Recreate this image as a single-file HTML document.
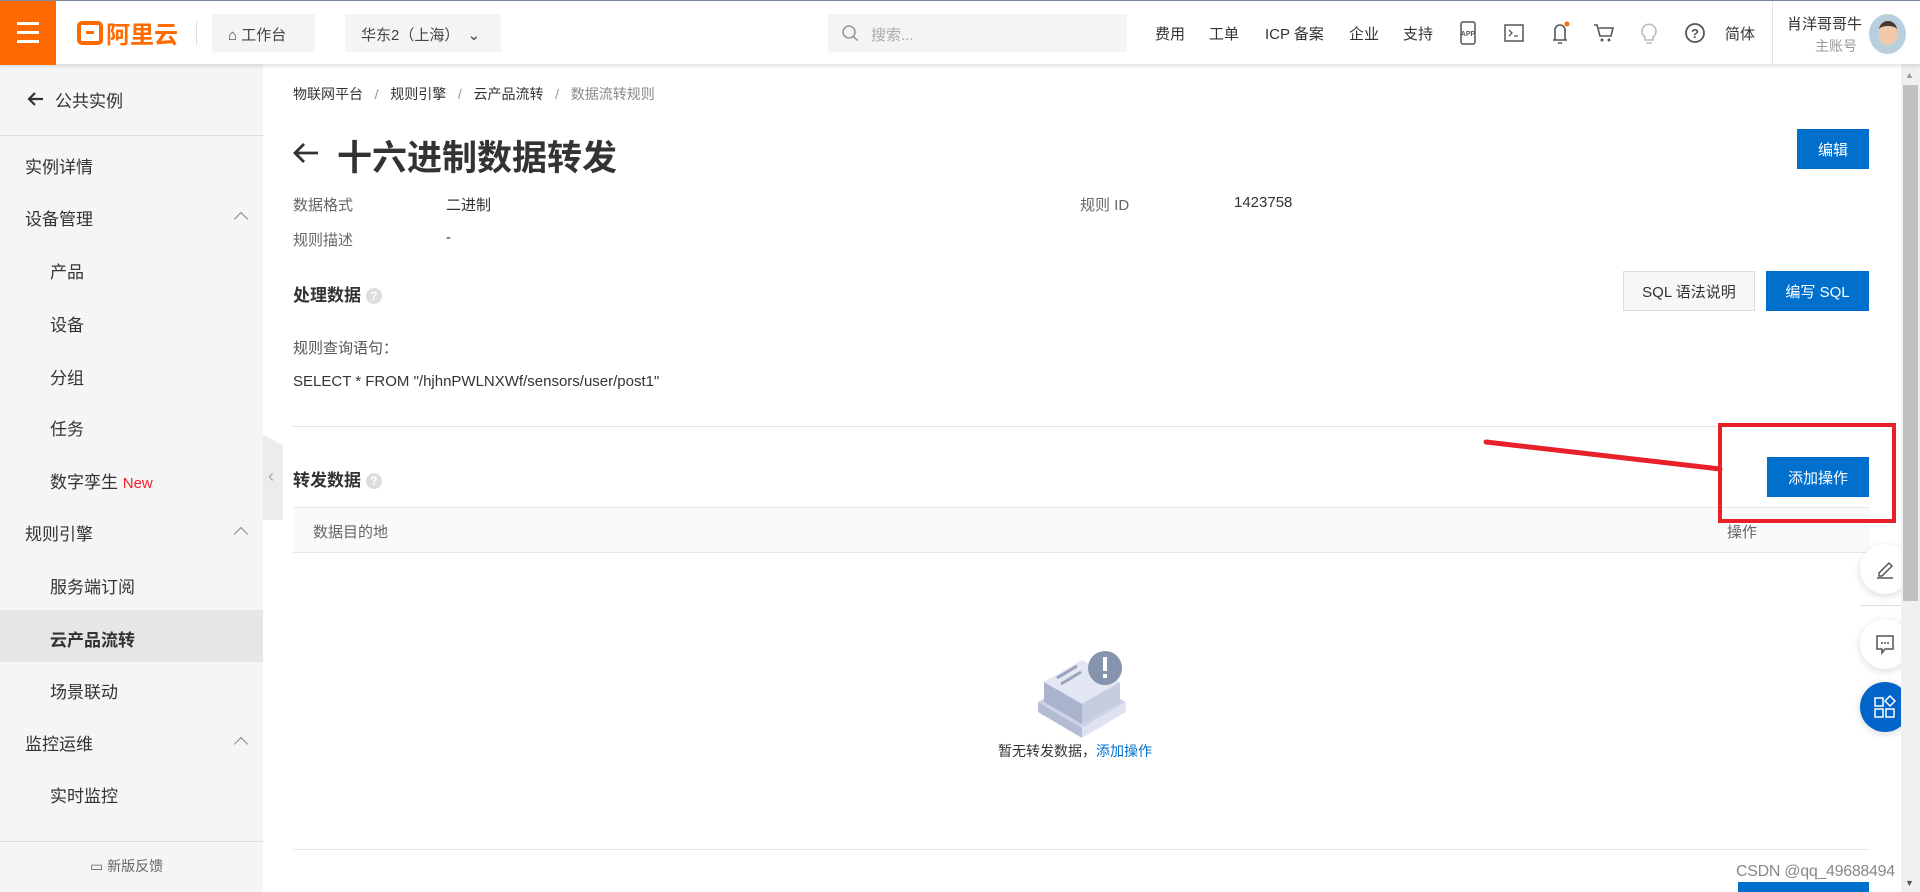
<!DOCTYPE html>
<html><head><meta charset="utf-8"><style>
*{margin:0;padding:0;box-sizing:border-box}
body{width:1920px;height:892px;overflow:hidden;position:relative;background:#fff;font-family:"Liberation Sans","Noto Sans CJK SC",sans-serif;color:#333}
.a{position:absolute;white-space:nowrap}
.hdr{position:absolute;left:0;top:0;width:1920px;height:64px;background:#fff;box-shadow:0 2px 4px rgba(0,0,0,.12);z-index:5;border-top:1px solid #7a8a9a}
.side{position:absolute;left:0;top:64px;width:263px;height:828px;background:#f5f5f5}
.si{position:absolute;left:25px;font-size:17px;color:#333}
.sub{left:50px}
.chev{position:absolute;left:236px;width:10px;height:10px;border-left:1.5px solid #888;border-top:1.5px solid #888;transform:rotate(45deg)}
.btn{position:absolute;background:#0070cc;color:#fff;font-size:15px;display:flex;align-items:center;justify-content:center}
.lab{font-size:15px;color:#666}
.circ{position:absolute;width:50px;height:50px;border-radius:50%;background:#fff;box-shadow:0 2px 8px rgba(0,0,0,.15);display:flex;align-items:center;justify-content:center}
</style></head><body>
<div class="hdr">
 <div class="a" style="left:0;top:0;width:56px;height:64px;background:#ff6a00"></div>
 <div class="a" style="left:17px;top:21px;width:22px;height:3px;background:#fff"></div>
 <div class="a" style="left:17px;top:30px;width:22px;height:3px;background:#fff"></div>
 <div class="a" style="left:17px;top:39px;width:22px;height:3px;background:#fff"></div>
 <div class="a" style="left:77px;top:20px;width:26px;height:24px;border:4px solid #ff6a00;border-radius:5px"></div>
 <div class="a" style="left:86px;top:30px;width:8px;height:3px;background:#ff6a00"></div>
 <div class="a" style="left:106px;top:14px;font-size:24px;font-weight:bold;color:#ff6a00">阿里云</div>
 <div class="a" style="left:196px;top:20px;width:1px;height:24px;background:#ddd"></div>
 <div class="a" style="left:212px;top:13px;width:103px;height:38px;background:#f3f4f6"></div>
 <div class="a" style="left:228px;top:23px;font-size:15px;color:#444">⌂ 工作台</div>
 <div class="a" style="left:345px;top:13px;width:156px;height:38px;background:#f3f4f6"></div>
 <div class="a" style="left:361px;top:23px;font-size:15px;color:#444">华东2（上海）&nbsp;&nbsp;⌄</div>
 <div class="a" style="left:828px;top:13px;width:299px;height:38px;background:#f3f4f6"></div>
 <svg class="a" style="left:841px;top:23px" width="18" height="18"><circle cx="8" cy="8" r="6" fill="none" stroke="#999" stroke-width="1.6"/><line x1="12.5" y1="12.5" x2="16.5" y2="16.5" stroke="#999" stroke-width="1.6"/></svg>
 <div class="a" style="left:871px;top:23px;font-size:15px;color:#aaa">搜索...</div>
 <div class="a" style="left:1155px;top:22px;font-size:15px;color:#333">费用</div>
 <div class="a" style="left:1209px;top:22px;font-size:15px">工单</div>
 <div class="a" style="left:1265px;top:22px;font-size:15px">ICP 备案</div>
 <div class="a" style="left:1349px;top:22px;font-size:15px">企业</div>
 <div class="a" style="left:1403px;top:22px;font-size:15px">支持</div>
 <svg class="a" style="left:1458px;top:20px" width="20" height="24"><rect x="3" y="1" width="14" height="22" rx="2" fill="none" stroke="#555" stroke-width="1.5"/><text x="10" y="15" font-size="7" font-weight="bold" text-anchor="middle" fill="#555" font-family="Liberation Sans">APP</text></svg>
 <svg class="a" style="left:1504px;top:22px" width="20" height="20"><rect x="1" y="2" width="18" height="16" fill="none" stroke="#555" stroke-width="1.5"/><path d="M5 7l3 3-3 3M10 13h4" fill="none" stroke="#555" stroke-width="1.3"/></svg>
 <svg class="a" style="left:1549px;top:20px" width="22" height="24"><path d="M6 19V9a5 5 0 0110 0v10M4 19h14M9 22h4" fill="none" stroke="#555" stroke-width="1.6"/><circle cx="18" cy="3" r="2.5" fill="#ff6a00"/></svg>
 <svg class="a" style="left:1593px;top:22px" width="22" height="20"><path d="M1 2h3l3 11h11l2-8H6" fill="none" stroke="#555" stroke-width="1.6"/><circle cx="9" cy="17" r="1.5" fill="#555"/><circle cx="16" cy="17" r="1.5" fill="#555"/></svg>
 <svg class="a" style="left:1640px;top:20px" width="18" height="24"><path d="M5 16a7 7 0 118 0v3H5z M6 22h6" fill="none" stroke="#bbb" stroke-width="1.6"/></svg>
 <svg class="a" style="left:1684px;top:21px" width="22" height="22"><circle cx="11" cy="11" r="9" fill="none" stroke="#555" stroke-width="1.8"/><text x="11" y="16" font-size="13" font-weight="bold" text-anchor="middle" fill="#555" font-family="Liberation Sans">?</text></svg>
 <div class="a" style="left:1725px;top:22px;font-size:15px">简体</div>
 <div class="a" style="left:1772px;top:0;width:1px;height:64px;background:#e5e5e5"></div>
 <div class="a" style="left:1787px;top:12px;font-size:15px;color:#333">肖洋哥哥牛</div>
 <div class="a" style="left:1815px;top:35px;font-size:14px;color:#999">主账号</div>
 <div class="a" style="left:1869px;top:13px;width:37px;height:40px;border-radius:50%;background:#b8d0de;overflow:hidden"><div style="margin:7px auto 0;width:18px;height:24px;border-radius:9px;background:#f1c9a8;border-top:5px solid #4a3a30"></div></div>
</div>

<div class="side">
 <div class="a" style="left:0;top:71px;width:263px;height:1px;background:#ddd"></div>
 <svg class="a" style="left:26px;top:27px" width="18" height="16"><path d="M17 8H3M9 2L3 8l6 6" fill="none" stroke="#333" stroke-width="2.2"/></svg>
 <div class="si" style="left:55px;top:23px">公共实例</div>
 <div class="si" style="top:89px">实例详情</div>
 <div class="si" style="top:141px">设备管理</div><div class="chev" style="top:150px"></div>
 <div class="si sub" style="top:194px">产品</div>
 <div class="si sub" style="top:247px">设备</div>
 <div class="si sub" style="top:300px">分组</div>
 <div class="si sub" style="top:351px">任务</div>
 <div class="si sub" style="top:404px">数字孪生 <span style="color:#f5222d;font-size:15px">New</span></div>
 <div class="si" style="top:456px">规则引擎</div><div class="chev" style="top:465px"></div>
 <div class="si sub" style="top:509px">服务端订阅</div>
 <div class="a" style="left:0;top:546px;width:263px;height:52px;background:#e6e6e6"></div>
 <div class="si sub" style="top:562px;font-weight:bold">云产品流转</div>
 <div class="si sub" style="top:614px">场景联动</div>
 <div class="si" style="top:666px">监控运维</div><div class="chev" style="top:675px"></div>
 <div class="si sub" style="top:718px">实时监控</div>
 <div class="a" style="left:0;top:777px;width:263px;height:1px;background:#ddd"></div>
 <div class="a" style="left:90px;top:792px;font-size:14px;color:#666">▭ 新版反馈</div>
</div>
<div class="a" style="left:263px;top:435px;width:20px;height:85px;background:#ececec;clip-path:polygon(0 0,100% 12%,100% 100%,0 100%)"></div>
<div class="a" style="left:268px;top:466px;font-size:18px;color:#aaa">‹</div>

<div class="a" style="left:293px;top:84px;font-size:14px;color:#333">物联网平台&nbsp;&nbsp;&nbsp;<span style="color:#999">/</span>&nbsp;&nbsp;&nbsp;规则引擎&nbsp;&nbsp;&nbsp;<span style="color:#999">/</span>&nbsp;&nbsp;&nbsp;云产品流转&nbsp;&nbsp;&nbsp;<span style="color:#999">/</span>&nbsp;&nbsp;&nbsp;<span style="color:#888">数据流转规则</span></div>
<svg class="a" style="left:292px;top:142px" width="28" height="22"><path d="M26 11H3M12 2l-9 9 9 9" fill="none" stroke="#333" stroke-width="2.8"/></svg>
<div class="a" style="left:337px;top:130px;font-size:35px;font-weight:bold;color:#333">十六进制数据转发</div>
<div class="btn" style="left:1797px;top:129px;width:72px;height:40px">编辑</div>
<div class="a lab" style="left:293px;top:194px">数据格式</div>
<div class="a" style="left:446px;top:194px;font-size:15px">二进制</div>
<div class="a lab" style="left:1080px;top:194px">规则 ID</div>
<div class="a" style="left:1234px;top:194px;font-size:15px">1423758</div>
<div class="a lab" style="left:293px;top:229px">规则描述</div>
<div class="a" style="left:446px;top:229px;font-size:15px">-</div>
<div class="a" style="left:293px;top:281px;font-size:17px;font-weight:bold">处理数据 <span style="display:inline-block;width:16px;height:16px;border-radius:50%;background:#ddd;color:#fff;font-size:12px;text-align:center;line-height:16px;vertical-align:1px">?</span></div>
<div class="a" style="left:1623px;top:271px;width:132px;height:40px;border:1px solid #ddd;background:#f7f7f7;font-size:15px;display:flex;align-items:center;justify-content:center">SQL 语法说明</div>
<div class="btn" style="left:1766px;top:271px;width:103px;height:40px">编写 SQL</div>
<div class="a" style="left:293px;top:337px;font-size:15px;color:#555">规则查询语句：</div>
<div class="a" style="left:293px;top:373px;font-size:15px">SELECT * FROM "/hjhnPWLNXWf/sensors/user/post1"</div>
<div class="a" style="left:293px;top:426px;width:1576px;height:1px;background:#e3e3e3"></div>
<div class="a" style="left:293px;top:466px;font-size:17px;font-weight:bold">转发数据 <span style="display:inline-block;width:16px;height:16px;border-radius:50%;background:#ddd;color:#fff;font-size:12px;text-align:center;line-height:16px;vertical-align:1px">?</span></div>
<div class="btn" style="left:1767px;top:457px;width:102px;height:40px">添加操作</div>
<div class="a" style="left:293px;top:507px;width:1576px;height:46px;background:#fafafa;border-top:1px solid #e8e8e8;border-bottom:1px solid #e8e8e8"></div>
<div class="a" style="left:313px;top:521px;font-size:15px;color:#666">数据目的地</div>
<div class="a" style="left:1727px;top:521px;font-size:15px;color:#666">操作</div>
<svg class="a" style="left:1037px;top:648px" width="90" height="90" viewBox="0 0 90 90">
 <polygon points="1,54 45,80 89,54 45,30" fill="#cdd3e6"/><polygon points="1,54 45,80 45,90 1,64" fill="#b4bcd4"/><polygon points="45,80 89,54 89,64 45,90" fill="#dfe3ef"/>
 <polygon points="7,34 45,56 83,34 45,12" fill="#e3e7f3"/><polygon points="7,34 45,56 45,76 7,54" fill="#aab3cc"/><polygon points="45,56 83,34 83,54 45,76" fill="#c5cce0"/>
 <line x1="20" y1="30" x2="40" y2="18" stroke="#9aa3bb" stroke-width="3"/><line x1="24" y1="36" x2="44" y2="24" stroke="#9aa3bb" stroke-width="3"/>
 <circle cx="68" cy="20" r="17" fill="#8593ad"/><rect x="66" y="9" width="4" height="14" fill="#fff"/><rect x="66" y="26" width="4" height="4" fill="#fff"/>
</svg>
<div class="a" style="left:998px;top:741px;font-size:14px;color:#333">暂无转发数据，<span style="color:#0070cc">添加操作</span></div>
<div class="a" style="left:293px;top:849px;width:1576px;height:1px;background:#e6e6e6"></div>
<div class="a" style="left:1738px;top:882px;width:131px;height:10px;background:#0070cc"></div>
<div class="a" style="left:1736px;top:863px;font-size:16px;letter-spacing:-0.3px;color:#888">CSDN @qq_49688494</div>

<svg class="a" style="left:0;top:0;z-index:6" width="1920" height="892"><path d="M1486 442L1720 469" stroke="#e8202a" stroke-width="5" stroke-linecap="round"/><rect x="1720" y="425" width="174" height="96" fill="none" stroke="#e8202a" stroke-width="4"/></svg>

<div class="circ" style="left:1860px;top:544px"><svg width="22" height="22"><path d="M5 15l10-10 3 3-10 10H5zM3 20h16" fill="none" stroke="#555" stroke-width="1.5"/></svg></div>
<div class="a" style="left:1860px;top:605px;width:50px;height:1px;background:#ddd"></div>
<div class="circ" style="left:1860px;top:619px"><svg width="22" height="22"><path d="M3 3h16v13h-8l-3 4v-4H3z" fill="none" stroke="#555" stroke-width="1.5"/><circle cx="8" cy="10" r="1" fill="#555"/><circle cx="11" cy="10" r="1" fill="#555"/><circle cx="14" cy="10" r="1" fill="#555"/></svg></div>
<div class="circ" style="left:1860px;top:682px;background:#0064c8"><svg width="24" height="24"><rect x="2" y="3" width="8" height="8" fill="none" stroke="#fff" stroke-width="1.5"/><rect x="2" y="14" width="8" height="8" fill="none" stroke="#fff" stroke-width="1.5"/><rect x="13" y="14" width="8" height="8" fill="none" stroke="#fff" stroke-width="1.5"/><path d="M17 1l5 5-5 5-5-5z" fill="none" stroke="#fff" stroke-width="1.5"/></svg></div>

<div class="a" style="left:1901px;top:64px;width:19px;height:828px;background:#f0f0f0"></div>
<div class="a" style="left:1905px;top:70px;font-size:9px;color:#999">▲</div>
<div class="a" style="left:1903px;top:85px;width:15px;height:516px;background:#c1c1c1"></div>
<div class="a" style="left:1905px;top:878px;font-size:9px;color:#555">▼</div>
</body></html>
